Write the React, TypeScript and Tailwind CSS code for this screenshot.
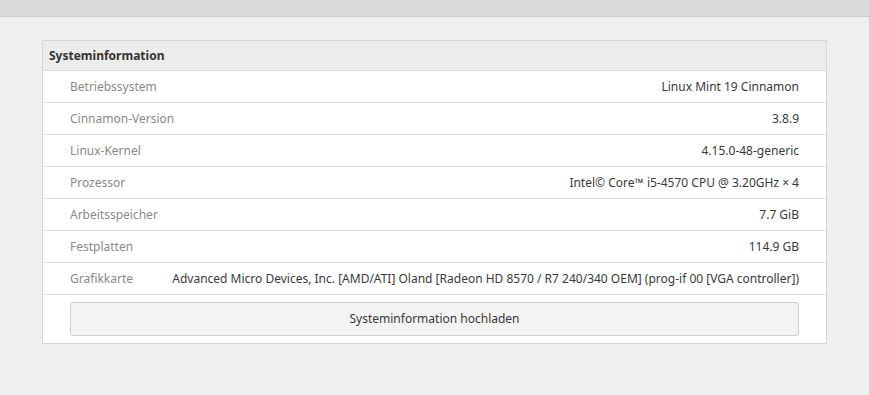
const rows = [
  { label: "Betriebssystem", value: "Linux Mint 19 Cinnamon" },
  { label: "Cinnamon-Version", value: "3.8.9" },
  { label: "Linux-Kernel", value: "4.15.0-48-generic" },
  { label: "Prozessor", value: "Intel© Core™ i5-4570 CPU @ 3.20GHz × 4" },
  { label: "Arbeitsspeicher", value: "7.7 GiB" },
  { label: "Festplatten", value: "114.9 GB" },
  {
    label: "Grafikkarte",
    value:
      "Advanced Micro Devices, Inc. [AMD/ATI] Oland [Radeon HD 8570 / R7 240/340 OEM] (prog-if 00 [VGA controller])",
  },
];

export default function App() {
  return (
    <div className="h-[395px] w-[869px] bg-[#efefef] font-['Noto_Sans',sans-serif] text-[12px]">
      <div className="h-[17px] border-b border-[#c9c9c9] bg-[#dadada]" />
      <div className="px-[42px] pt-[23px]">
        <div className="border border-[#d6d6d6] bg-white">
          <div className="flex h-[30px] items-center border-b border-[#dcdcdc] bg-[#ececec] px-[6px] font-bold text-[#333]">
            Systeminformation
          </div>
          {rows.map((row) => (
            <div
              key={row.label}
              className="flex h-[32px] items-center justify-between border-b border-[#e2e2e2] pl-[27px] pr-[27px]"
            >
              <span className="text-[#8a8a8a]">{row.label}</span>
              <span className="text-[#3a3a3a]">{row.value}</span>
            </div>
          ))}
          <div className="px-[27px] pt-[7px] pb-[7px]">
            <button className="h-[34px] w-full rounded-[3px] border border-[#cfcfcf] bg-[#f3f3f3] text-[#3a3a3a]">
              Systeminformation hochladen
            </button>
          </div>
        </div>
      </div>
    </div>
  );
}
